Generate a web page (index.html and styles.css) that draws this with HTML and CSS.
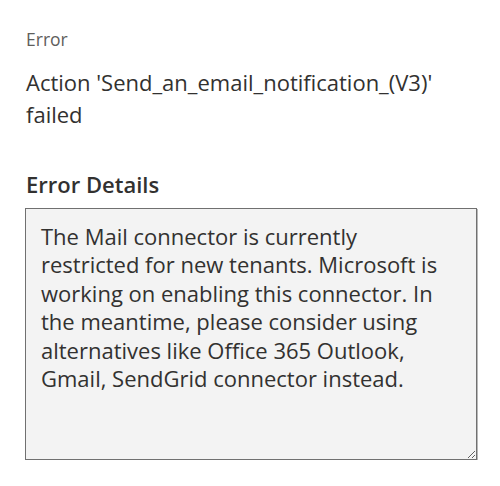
FILE: index.html
```html
<!DOCTYPE html>
<html>
<head>
    <title>Run details</title>
    <link rel="stylesheet" href="styles.css">
</head>
<body>
    <div class="panel">
        <div class="field-label">Error</div>
        <div class="error-title">Action 'Send_an_email_notification_(V3)' failed</div>
        <h2 class="details-heading">Error Details</h2>
        <textarea class="details-box" wrap="off" readonly>The Mail connector is currently
restricted for new tenants. Microsoft is
working on enabling this connector. In
the meantime, please consider using
alternatives like Office 365 Outlook,
Gmail, SendGrid connector instead.</textarea>
    </div>
</body>
</html>
```
FILE: styles.css
```css
* {
    box-sizing: border-box;
}
body {
    margin: 0;
    background-color: white;
    font-family: "Open Sans", "Noto Sans", sans-serif;
    color: #323130;
}
.panel {
    padding: 27px 0 0 26px;
    width: 480px;
}
.field-label {
    font-size: 17.5px;
    line-height: 24px;
    color: #605e5c;
}
.error-title {
    margin-top: 14.5px;
    font-size: 22px;
    line-height: 32px;
    width: 440px;
}
.details-heading {
    margin: 41px 0 11.5px;
    font-size: 22px;
    font-weight: 600;
    line-height: 26px;
}
.details-box {
    display: block;
    width: 452px;
    height: 252px;
    margin-left: -1px;
    padding: 13px 15px;
    border: 1px solid #707070;
    box-shadow: 1px 1px 0 #b8b8b8;
    background-color: #f3f3f3;
    font-family: "Open Sans", "Noto Sans", sans-serif;
    font-size: 22px;
    line-height: 28.4px;
    color: #323130;
    overflow: hidden;
}
```
